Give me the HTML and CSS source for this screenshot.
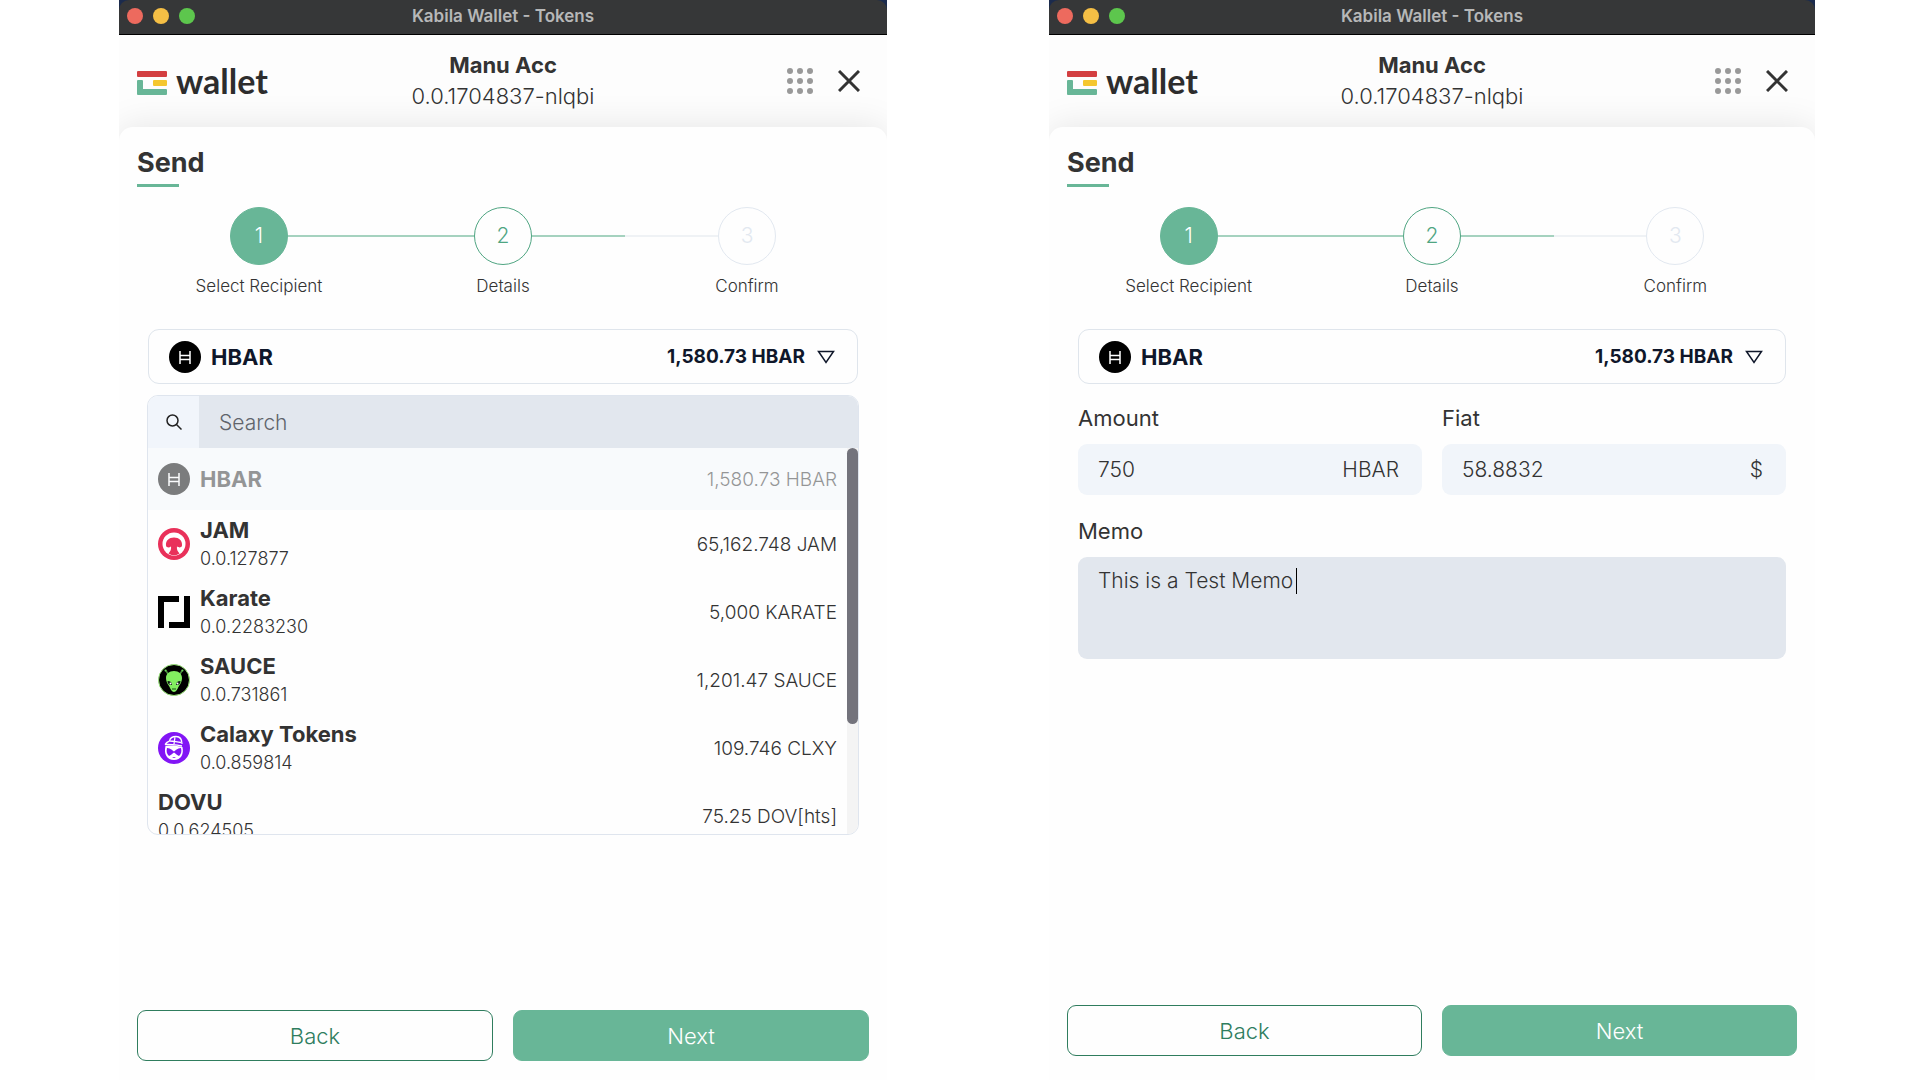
FILE: index.html
```html
<!DOCTYPE html>
<html lang="en">
  <head>
    <meta charset="UTF-8" />
    <meta name="viewport" content="width=device-width, initial-scale=1.0" />
    <title>Kabila Wallet - Tokens</title>
    <link rel="stylesheet" href="styles.css" />
  </head>
  <body>
    <!-- Shared icons -->
    <svg class="sprite" aria-hidden="true">
      <symbol id="logo-mark" viewBox="0 0 30 24">
        <rect x="0" y="0" width="30" height="6" rx="1" fill="#d33f41" />
        <rect x="16" y="9" width="14" height="6" rx="1" fill="#f4c72f" />
        <path d="M1 9h4q1 0 1 1v8h23q1 0 1 1v4q0 1-1 1H1q-1 0-1-1V10q0-1 1-1z" fill="#68b697" />
      </symbol>
      <symbol id="dots" viewBox="0 0 26 26">
        <g fill="#999">
          <circle cx="3" cy="3" r="3" /><circle cx="13" cy="3" r="3" /><circle cx="23" cy="3" r="3" />
          <circle cx="3" cy="13" r="3" /><circle cx="13" cy="13" r="3" /><circle cx="23" cy="13" r="3" />
          <circle cx="3" cy="23" r="3" /><circle cx="13" cy="23" r="3" /><circle cx="23" cy="23" r="3" />
        </g>
      </symbol>
      <symbol id="close" viewBox="0 0 22 22">
        <path d="M1 1l20 20M21 1L1 21" stroke="#333" stroke-width="3" />
      </symbol>
      <symbol id="hbar" viewBox="0 0 32 32">
        <circle cx="16" cy="16" r="16" />
        <path d="M11 10v13M21 10v13M11 14.5h10M11 18.5h10" stroke="#fff" stroke-width="1.5" fill="none" />
      </symbol>
      <symbol id="triangle" viewBox="0 0 18 14">
        <path d="M1.500 1.500h15L9 12.500z" fill="none" stroke="#0f172a" stroke-width="1.500" />
      </symbol>
    </svg>

    <main class="screens">
      <!-- Token list open -->
      <section class="wallet">
        <div class="titlebar-wrap">
          <div class="titlebar">
            <div class="lights"><i class="red"></i><i class="yellow"></i><i class="green"></i></div>
            <div class="titlebar-text">Kabila Wallet - Tokens</div>
          </div>
        </div>
        <header class="header">
          <a href="#" class="logo">
            <svg class="logo-mark" aria-hidden="true"><use href="#logo-mark" /></svg>
            <span>wallet</span>
          </a>
          <div class="account">
            <div class="account-name">Manu Acc</div>
            <div class="account-id">0.0.1704837-nlqbi</div>
          </div>
          <div class="header-actions">
            <button type="button" aria-label="Apps"><svg width="26" height="26"><use href="#dots" /></svg></button>
            <button type="button" aria-label="Close"><svg width="22" height="22"><use href="#close" /></svg></button>
          </div>
        </header>

        <div class="card">
          <h2 class="title">Send</h2>
          <ol class="steps">
            <li class="step done"><div class="track"><span class="dot">1</span></div>Select Recipient</li>
            <li class="step current"><div class="track"><span class="dot">2</span></div>Details</li>
            <li class="step"><div class="track"><span class="dot">3</span></div>Confirm</li>
          </ol>

          <div class="form">
            <div class="token-select">
              <svg class="token-icon" aria-hidden="true"><use href="#hbar" /></svg>
              <select aria-label="Token"><option>HBAR</option></select>
              <span class="balance">1,580.73 HBAR</span>
              <svg class="triangle" aria-hidden="true"><use href="#triangle" /></svg>
            </div>

            <div class="dropdown">
              <div class="search">
                <label for="search" aria-label="Search tokens">
                  <svg width="16" height="16" viewBox="0 0 16 16" fill="none" stroke="#222" stroke-width="1.500">
                    <circle cx="6.500" cy="6.500" r="5.500" />
                    <path d="M10.500 10.500l5 5" />
                  </svg>
                </label>
                <input type="text" id="search" placeholder="Search" />
              </div>
              <div class="list-area">
                <ul class="token-list">
                  <li class="token selected">
                    <svg class="token-icon" aria-hidden="true"><use href="#hbar" /></svg>
                    <div class="token-name">HBAR</div>
                    <div class="token-amount">1,580.73 HBAR</div>
                  </li>
                  <li class="token">
                    <svg class="token-icon" viewBox="0 0 32 32" aria-hidden="true">
                      <circle cx="16" cy="16" r="16" fill="#e9315a" />
                      <circle cx="16" cy="16" r="11.500" fill="#fff" />
                      <path d="M8 17.500C7.500 12.500 11 9.500 16 9.500s8.500 3 8 8c-.3 2.500-4 2.500-5 .8-.5 3 .5 5 2.500 7.200l-3 1.500h-5l-3-1.500c2-2.200 3-4.200 2.500-7.200-1 1.700-4.700 1.700-5-.8z" fill="#e9315a" />
                    </svg>
                    <div class="token-name">JAM<span>0.0.127877</span></div>
                    <div class="token-amount">65,162.748 JAM</div>
                  </li>
                  <li class="token">
                    <svg class="token-icon" viewBox="0 0 32 32" aria-hidden="true">
                      <path d="M0 0h21v6H6v26H0zM26 0h6v32H11v-6h15z" />
                    </svg>
                    <div class="token-name">Karate<span>0.0.2283230</span></div>
                    <div class="token-amount">5,000 KARATE</div>
                  </li>
                  <li class="token">
                    <svg class="token-icon" viewBox="0 0 32 32" aria-hidden="true">
                      <circle cx="16" cy="16" r="15.500" fill="#000" stroke="#9be87a" />
                      <path d="M10 10L7.500 6M22 10l2.500-4" stroke="#4a8d3c" stroke-width="1.500" />
                      <circle cx="7.500" cy="6.500" r="1" fill="#6ad85c" />
                      <circle cx="24.500" cy="6.500" r="1" fill="#6ad85c" />
                      <path d="M16 7c5 0 8 3 8 7 0 3-1 5-3 8-1.500 3-3 6-5 6s-3.500-3-5-6c-2-3-3-5-3-8 0-4 3-7 8-7z" fill="#82ee60" />
                      <path d="M9.500 17c3 0 4.500 1.500 4.500 4-2.500.5-4.500-1-4.500-4zM22.500 17c-3 0-4.500 1.500-4.500 4 2.500.5 4.500-1 4.500-4z" fill="#0a1a10" />
                      <circle cx="12.500" cy="19.500" r="1" fill="#fff" />
                      <circle cx="19.500" cy="19.500" r="1" fill="#fff" />
                      <path d="M14 25h4" stroke="#174d18" />
                    </svg>
                    <div class="token-name">SAUCE<span>0.0.731861</span></div>
                    <div class="token-amount">1,201.47 SAUCE</div>
                  </li>
                  <li class="token">
                    <svg class="token-icon" viewBox="0 0 32 32" aria-hidden="true">
                      <circle cx="16" cy="16" r="16" fill="#8215f5" />
                      <path d="M7 12.500c2-3 4-3 4.500-3.500C12 6 15 4.500 18 4.500c4 0 6 3 6 7.500M7 12.500c6-.8 10 .5 17 1.500M12 9c4 0 6 1 11 1.500M17 5l-1 7" fill="none" stroke="#fff" stroke-width="1.300" />
                      <path d="M7.500 14C5.500 22 9 28 16 28s10-6 8.500-13c-5-1-11-2-17-1z" fill="#fff" />
                      <path d="M9 16c4 .5 5 2 7 3.500 2-1.500 3-3 7-3.500 1 4 0 6-2 8-2-1-3-2-5-3.500-2 1.500-3 2.500-5 3.500-2-2-3-4-2-8z" fill="#8215f5" />
                      <path d="M14 25h4l-2 1z" fill="#8215f5" />
                    </svg>
                    <div class="token-name">Calaxy Tokens<span>0.0.859814</span></div>
                    <div class="token-amount">109.746 CLXY</div>
                  </li>
                  <li class="token">
                    <div class="token-name">DOVU<span>0.0.624505</span></div>
                    <div class="token-amount">75.25 DOV[hts]</div>
                  </li>
                </ul>
                <div class="scrollbar"><div class="thumb"></div></div>
              </div>
            </div>
          </div>

          <div class="buttons">
            <button type="button" class="btn btn-back">Back</button>
            <button type="button" class="btn btn-next">Next</button>
          </div>
        </div>
      </section>

      <!-- Amount and memo filled in -->
      <section class="wallet wallet-short">
        <div class="titlebar-wrap">
          <div class="titlebar">
            <div class="lights"><i class="red"></i><i class="yellow"></i><i class="green"></i></div>
            <div class="titlebar-text">Kabila Wallet - Tokens</div>
          </div>
        </div>
        <header class="header">
          <a href="#" class="logo">
            <svg class="logo-mark" aria-hidden="true"><use href="#logo-mark" /></svg>
            <span>wallet</span>
          </a>
          <div class="account">
            <div class="account-name">Manu Acc</div>
            <div class="account-id">0.0.1704837-nlqbi</div>
          </div>
          <div class="header-actions">
            <button type="button" aria-label="Apps"><svg width="26" height="26"><use href="#dots" /></svg></button>
            <button type="button" aria-label="Close"><svg width="22" height="22"><use href="#close" /></svg></button>
          </div>
        </header>

        <div class="card">
          <h2 class="title">Send</h2>
          <ol class="steps">
            <li class="step done"><div class="track"><span class="dot">1</span></div>Select Recipient</li>
            <li class="step current"><div class="track"><span class="dot">2</span></div>Details</li>
            <li class="step"><div class="track"><span class="dot">3</span></div>Confirm</li>
          </ol>

          <form class="form">
            <div class="token-select">
              <svg class="token-icon" aria-hidden="true"><use href="#hbar" /></svg>
              <select aria-label="Token"><option>HBAR</option></select>
              <span class="balance">1,580.73 HBAR</span>
              <svg class="triangle" aria-hidden="true"><use href="#triangle" /></svg>
            </div>

            <div class="field-row">
              <div class="field">
                <label for="amount">Amount</label>
                <div class="input-box">
                  <input type="text" id="amount" value="750" />
                  <span>HBAR</span>
                </div>
              </div>
              <div class="field">
                <label for="fiat">Fiat</label>
                <div class="input-box">
                  <input type="text" id="fiat" value="58.8832" />
                  <span>$</span>
                </div>
              </div>
            </div>
            <div class="field memo">
              <label for="memo">Memo</label>
              <div class="memo-box">
                <textarea id="memo">This is a Test Memo</textarea>
                <span class="caret"></span>
              </div>
            </div>
          </form>

          <div class="buttons">
            <button type="button" class="btn btn-back">Back</button>
            <button type="button" class="btn btn-next">Next</button>
          </div>
        </div>
      </section>
    </main>
  </body>
</html>
```

FILE: styles.css
```css
* {
  margin: 0;
  padding: 0;
  box-sizing: border-box;
}

body {
  background-color: #fff;
  color: #333;
  font-family: Inter, "Open Sans", sans-serif;
  font-size: 21px;
  font-weight: 300;
}

button,
input,
select,
textarea {
  font: inherit;
  color: inherit;
  border: none;
  outline: none;
  background: none;
}

button {
  cursor: pointer;
}

svg {
  display: block;
}

.sprite {
  display: none;
}

.screens {
  display: grid;
  grid-template-columns: minmax(0, 768fr) minmax(0, 766fr);
  gap: 162px;
  min-height: 100vh;
  padding: 0 105px 0 119px;
}

.wallet {
  display: flex;
  flex-direction: column;
  background-color: #fdfdfd;
  overflow: hidden;
}

/* Window title bar */
.titlebar-wrap {
  background-color: #1b2b4d;
  position: relative;
  z-index: 1;
}

.titlebar {
  display: grid;
  grid-template-columns: 1fr auto 1fr;
  align-items: center;
  height: 35px;
  padding: 0 8px 2px;
  background-color: #363738;
  border-bottom: 1px solid #000;
  border-radius: 10px 10px 0 0;
}

.lights {
  display: flex;
  gap: 10px;
}

.lights i {
  width: 16px;
  height: 16px;
  border-radius: 50%;
}

.red {
  background-color: #ed6a5e;
}

.yellow {
  background-color: #f5bf45;
}

.green {
  background-color: #5dc64d;
}

.titlebar-text {
  color: #b7b8b8;
  font-size: 17px;
  line-height: 20px;
  font-weight: 600;
}

/* Header */
.header {
  display: grid;
  grid-template-columns: 1fr auto 1fr;
  height: 92px;
  padding: 15px 18px 0;
}

.logo {
  display: flex;
  align-items: center;
  gap: 9px;
  height: 62px;
  color: #2d2d2d;
  text-decoration: none;
}

.logo-mark {
  width: 30px;
  height: 24px;
  margin-top: 3px;
}

.logo span {
  font-family: Lato, sans-serif;
  font-size: 34px;
  line-height: 40px;
  font-weight: 700;
}

.account {
  text-align: center;
}

.account-name {
  font-size: 22px;
  line-height: 30px;
  font-weight: 700;
}

.account-id {
  font-size: 22px;
  line-height: 32px;
}

.header-actions {
  display: flex;
  align-items: center;
  justify-content: flex-end;
  gap: 25px;
  height: 62px;
  padding-right: 9px;
}

/* Card */
.card {
  display: flex;
  flex: 1;
  flex-direction: column;
  padding: 20px 18px 19px;
  background-color: #fefefe;
  border-radius: 14px 14px 0 0;
  box-shadow: 0 0 36px rgba(0, 0, 0, 0.1);
}

.wallet-short .card {
  padding-bottom: 24px;
}

.title {
  font-size: 27px;
  line-height: 32px;
  font-weight: 700;
}

.title::after {
  content: "";
  display: block;
  width: 42px;
  height: 3px;
  margin-top: 5px;
  background-color: #68b697;
}

.steps {
  display: grid;
  grid-template-columns: repeat(3, 1fr);
  margin-top: 20px;
  list-style: none;
}

.step {
  font-size: 17px;
  line-height: 24px;
  text-align: center;
}

.track {
  display: flex;
  align-items: center;
  margin-bottom: 9px;
}

.track::before,
.track::after {
  content: "";
  flex: 1;
  height: 2px;
  background-color: #eff2f5;
}

.step.done .track::after,
.step.current .track::before,
.step.current .track::after {
  background-color: #a5d2bf;
}

.step:first-child .track::before,
.step:last-child .track::after {
  background-color: transparent;
}

.dot {
  width: 58px;
  height: 58px;
  border: 1px solid #e2e8f0;
  border-radius: 50%;
  color: #e2e8f0;
  font-size: 21px;
  line-height: 56px;
}

.done .dot {
  background-color: #68b697;
  border-color: #68b697;
  color: #fff;
}

.current .dot {
  border-color: #4fa582;
  color: #4fa582;
}

.form {
  margin-top: 31px;
  padding: 0 11px;
}

/* Token select */
.token-select {
  display: flex;
  align-items: center;
  height: 55px;
  padding: 0 22px 0 20px;
  border: 1px solid #dfe5ec;
  border-radius: 11px;
  color: #0f172a;
}

.token-icon {
  flex: none;
  width: 32px;
  height: 32px;
  margin-right: 10px;
}

.token-select select {
  flex: 1;
  appearance: none;
  font-size: 22px;
  font-weight: 700;
}

.balance {
  font-size: 19px;
  font-weight: 700;
}

.triangle {
  width: 18px;
  height: 14px;
  margin-left: 12px;
}

.dropdown {
  margin: 11px -1px 0;
  border: 1px solid #dfe5ee;
  border-radius: 11px;
  overflow: hidden;
}

.search {
  display: flex;
  height: 52px;
}

.search label {
  display: flex;
  align-items: center;
  justify-content: center;
  width: 51px;
  background-color: #f1f5fb;
}

.search input {
  flex: 1;
  padding: 0 20px;
  background-color: #e2e7ee;
}

.search input::placeholder {
  color: #5f646b;
}

.list-area {
  display: flex;
  height: 386px;
}

.token-list {
  flex: 1;
  list-style: none;
  overflow: hidden;
}

.token {
  display: flex;
  align-items: center;
  height: 68px;
  padding: 0 10px;
}

.token.selected {
  height: 62px;
  background-color: #f8fafc;
}

.token.selected > * {
  opacity: 0.5;
}

.token-name {
  flex: 1;
  font-size: 22px;
  line-height: 30px;
  font-weight: 700;
}

.token-name span {
  display: block;
  font-size: 18px;
  line-height: 28px;
  font-weight: 300;
}

.token-amount {
  font-size: 19px;
}

.scrollbar {
  width: 11px;
  background-color: #f4f4f4;
}

.thumb {
  height: 276px;
  border-radius: 6px;
  background-color: #73737c;
}

/* Amount, fiat and memo fields */
.field-row {
  display: grid;
  grid-template-columns: repeat(2, minmax(0, 1fr));
  gap: 20px;
  margin-top: 22px;
}

.field label {
  display: block;
  margin-bottom: 14px;
  font-size: 22px;
  line-height: 24px;
  font-weight: 400;
}

.input-box {
  display: flex;
  align-items: center;
  height: 51px;
  padding: 0 23px 0 20px;
  background-color: #f1f5fa;
  border-radius: 9px;
}

.input-box input {
  flex: 1;
  min-width: 0;
}

.memo {
  margin-top: 24px;
}

.memo-box {
  position: relative;
}

.memo-box textarea {
  display: block;
  width: 100%;
  height: 102px;
  padding: 10px 20px;
  line-height: 28px;
  background-color: #e2e7ee;
  border-radius: 9px;
  resize: none;
}

.caret {
  position: absolute;
  top: 11px;
  left: 218px;
  width: 1px;
  height: 26px;
  background-color: #000;
}

/* Footer buttons */
.buttons {
  display: grid;
  grid-template-columns: 1fr 1fr;
  gap: 20px;
  margin-top: auto;
}

.btn {
  height: 51px;
  border: 1px solid #68b697;
  border-radius: 9px;
  font-size: 22px;
}

.btn-back {
  border-color: #2f7d5e;
  color: #2f7d5e;
}

.btn-next {
  background-color: #68b697;
  color: #fff;
}
```
